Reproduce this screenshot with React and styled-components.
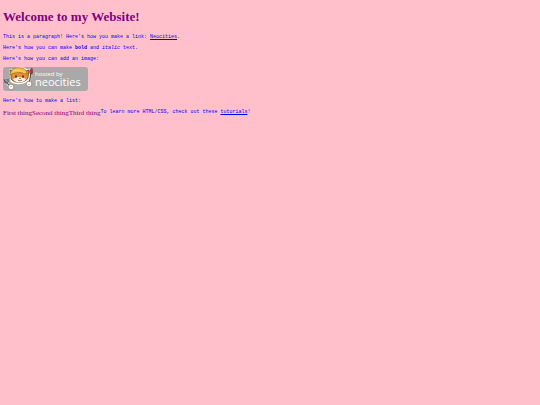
import React from "react";
import styled, { createGlobalStyle } from "styled-components";

const GlobalStyle = createGlobalStyle`
  body {
    margin: 0;
    background: #ffc0cb;
    color: #800080;
    font: 7px/8px "Liberation Serif", "Times New Roman", serif;
  }
`;

const Page = styled.main`
  padding: 9px 3px;
`;

const Title = styled.h1`
  margin: 0 0 9px;
  font-size: 13px;
  line-height: 16px;
`;

const Paragraph = styled.p`
  margin: 0 0 5px;
  color: #0000ff;
  font: 5px/6px "Liberation Mono", "Courier New", monospace;
`;

const Link = styled.a`
  color: #0000ee;
  text-decoration: underline;
`;

const BadgeLink = styled.a`
  display: block;
  width: 85px;
  height: 26px;
  margin-bottom: 5px;
`;

const BadgeDrawing = styled.svg`
  display: block;
  font-family: "Open Sans", "Noto Sans", sans-serif;
`;

const Row = styled.div`
  display: flex;
`;

const List = styled.ul`
  display: flex;
  margin: 0;
  padding: 0;
  list-style: none;
`;

function NeocitiesBadge() {
  return (
    <BadgeDrawing width="85" height="26" viewBox="0 0 85 26" role="img" aria-label="Hosted by Neocities">
      <rect x="0" y="0" width="85" height="24" rx="3" fill="#a9a9a9" />
      <g stroke="#fff" strokeWidth="2.4" strokeLinecap="round" fill="none">
        <path d="M2 13 8 21M28 3 26 16" />
      </g>
      <path d="M7 3 11 3C14 0 20 0 24 3l3 0-1 9c-3 5-14 6-18 2Z" fill="#fff" stroke="#fff" strokeWidth="1.4" />
      <path d="M8 9 7 3l4 1c4-3 9-3 12 0l3-1-1 8c-2 5-14 6-17 1Z" fill="#e98b35" stroke="#4b3425" strokeWidth=".7" />
      <path d="M10 12c2-1 4-2 6-2s5 1 7 2c-1 4-11 5-13 0Z" fill="#fff3df" />
      <path d="M7 7c1-5 6-7 11-6 4 0 6 3 6 6-5-2-12-2-17 1Z" fill="#efc43c" stroke="#8a6224" strokeWidth=".6" />
      <path d="m10 4 4-1 4 1 4 2" fill="none" stroke="#ffe675" strokeWidth=".8" />
      <ellipse cx="13" cy="9.5" rx=".8" ry="1.2" fill="#302820" />
      <ellipse cx="20" cy="9.5" rx=".8" ry="1.2" fill="#302820" />
      <path d="m16 11 1 .8 1-.8m-3 2c1 1 3 1 4 0" fill="none" stroke="#603c2d" strokeWidth=".7" />
      <path d="m1 12 1 3 2 1 4 4M5 12l0 3-2 1m0-4 0 3" fill="none" stroke="#555" strokeWidth="1.1" />
      <path d="m28 6-2 11" stroke="#53413b" strokeWidth="1.2" />
      <path d="M27 7c-1-3 0-5 2-6 1 2 1 5 0 6Z" fill="#a83c34" stroke="#5a3c38" strokeWidth=".5" />
      <circle cx="8" cy="20" r="2.8" fill="#fff" stroke="#756659" strokeWidth=".6" />
      <circle cx="26" cy="17" r="2.8" fill="#fff" stroke="#756659" strokeWidth=".6" />
      <path d="m7 20 1-1 1 1m16-2 1-1 1 1" fill="none" stroke="#df9c5c" strokeWidth=".8" />
      <text x="32" y="9" fontSize="6" fill="#fff">hosted by</text>
      <text x="32" y="19" fontSize="11" fill="#fff">neocities</text>
    </BadgeDrawing>
  );
}

export default function App() {
  return (
    <>
      <GlobalStyle />
      <Page>
        <Title>Welcome to my Website!</Title>
        <Paragraph>
          This is a paragraph! Here's how you make a link:{" "}
          <Link href="#neocities">Neocities</Link>.
        </Paragraph>
        <Paragraph>
          Here's how you can make <strong>bold</strong> and <em>italic</em> text.
        </Paragraph>
        <Paragraph>Here's how you can add an image:</Paragraph>
        <BadgeLink href="#neocities">
          <NeocitiesBadge />
        </BadgeLink>
        <Paragraph>Here's how to make a list:</Paragraph>
        <Row>
          <List>
            <li>First thing</li>
            <li>Second thing</li>
            <li>Third thing</li>
          </List>
          <Paragraph>
            To learn more HTML/CSS, check out these <Link href="#tutorials">tutorials</Link>!
          </Paragraph>
        </Row>
      </Page>
    </>
  );
}
